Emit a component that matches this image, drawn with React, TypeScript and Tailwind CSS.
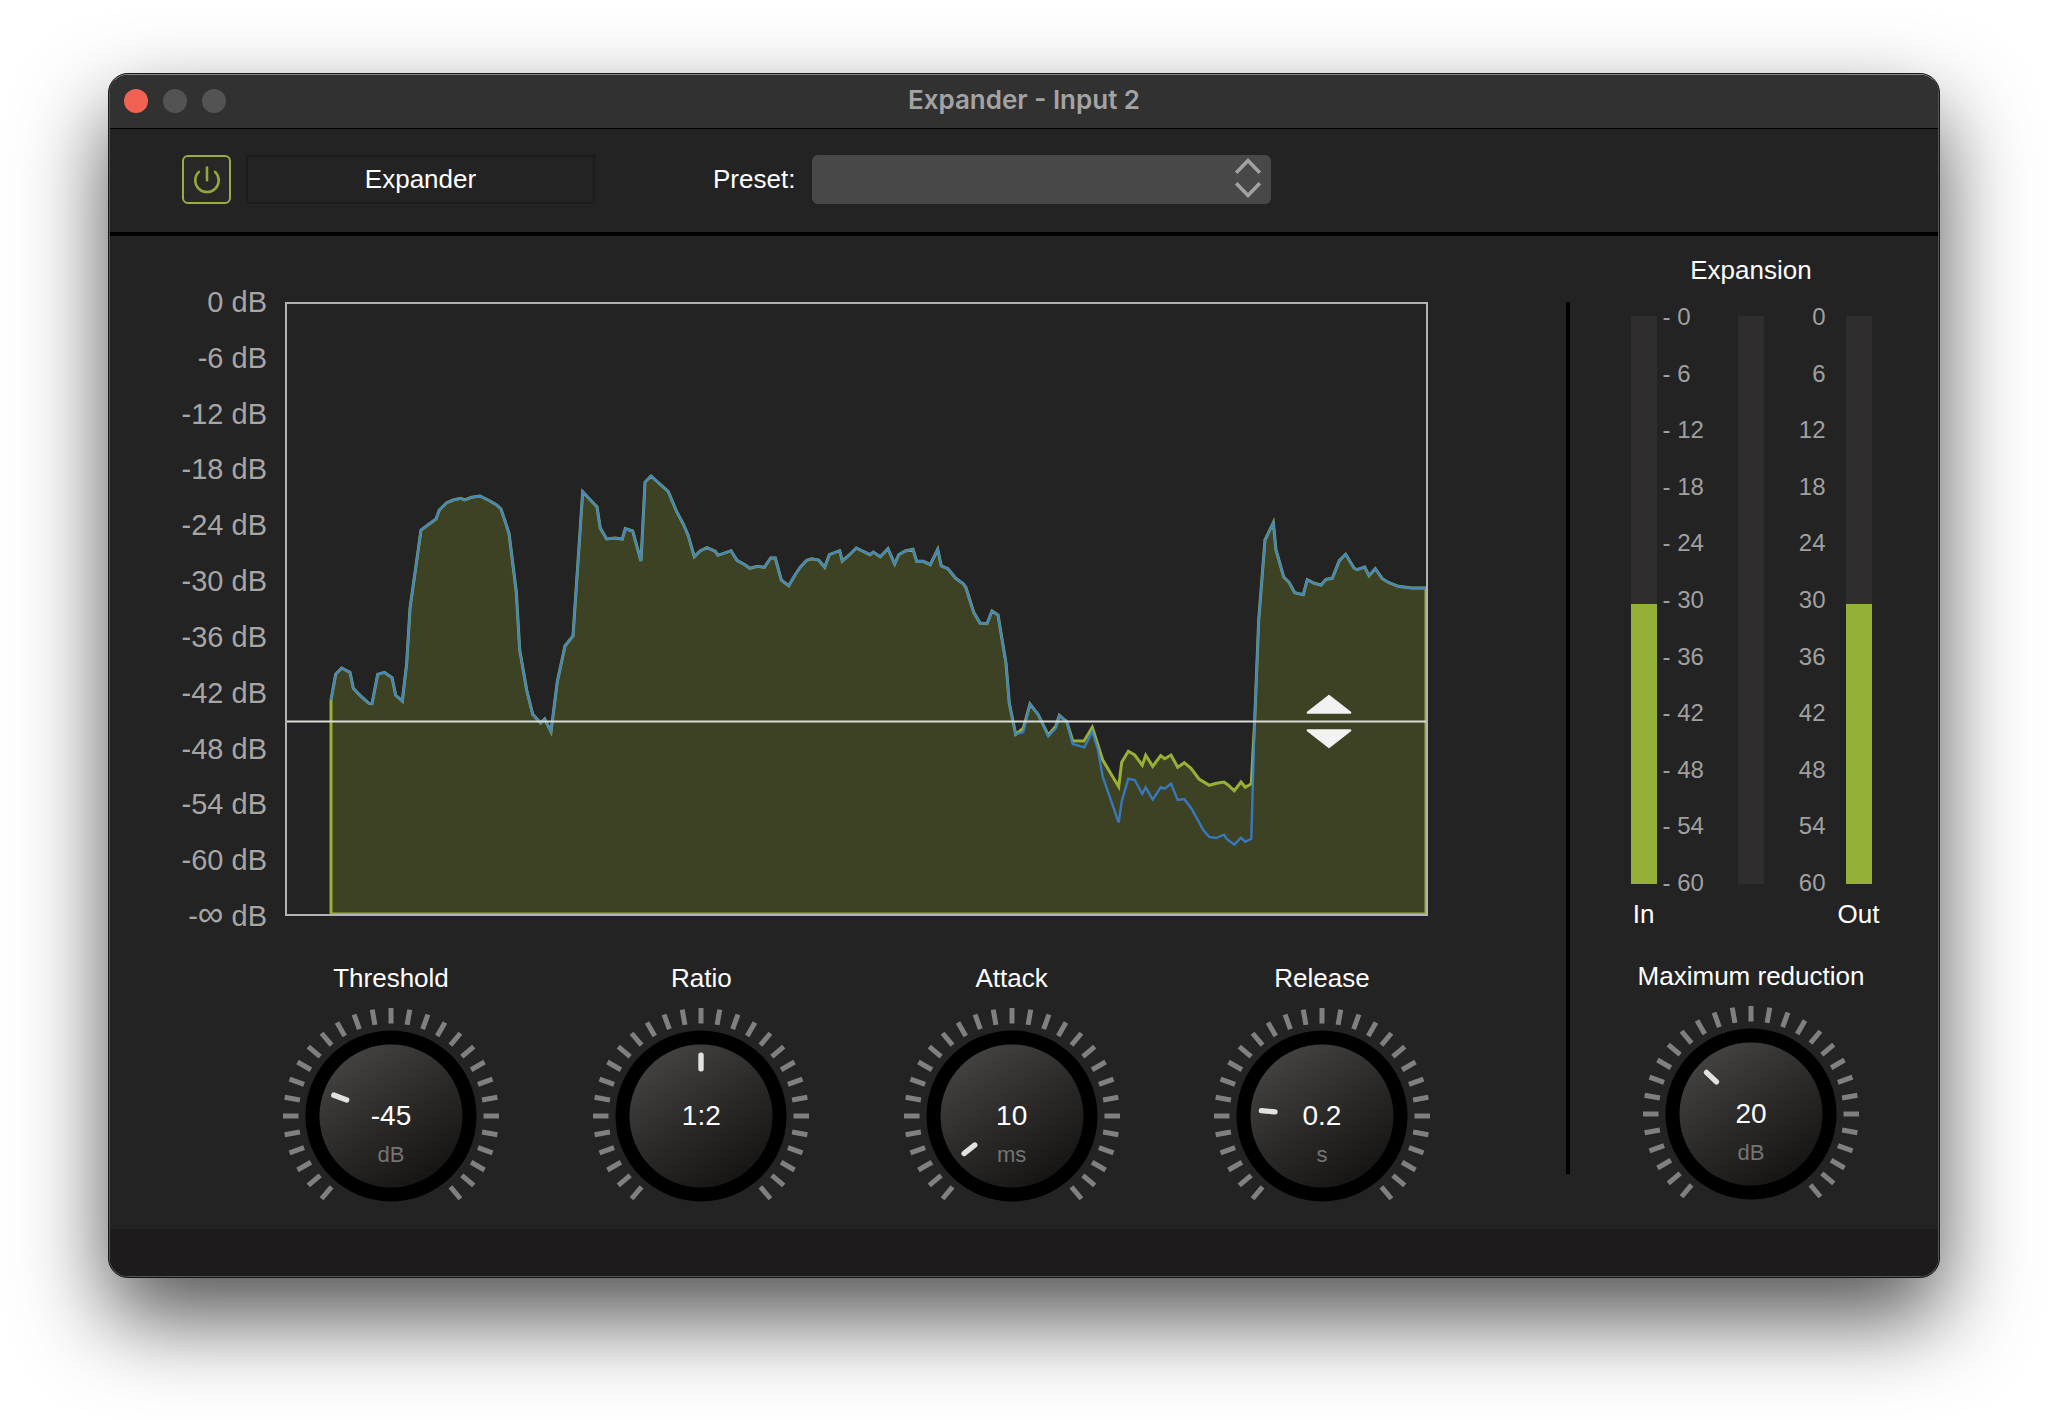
import { useId } from "react";

type Point = [number, number];

const chartLabels = ["0", "-6", "-12", "-18", "-24", "-30", "-36", "-42", "-48", "-54", "-60"];
const meterLabels = ["0", "6", "12", "18", "24", "30", "36", "42", "48", "54", "60"];

const lead: Point[] = [
  [331, 700], [335.7, 674.3], [341.7, 668], [350, 672.3], [353.3, 688.3], [360, 695.3], [369, 703.3], [372, 703.7],
  [377.7, 674.3], [384.3, 672.3], [392, 677.7], [395.7, 695.3], [402.3, 701], [406.7, 663.3], [410, 608.3],
  [421, 530], [436, 519], [439.3, 510], [446.7, 502.7], [453.3, 500], [460.7, 498.3], [464.7, 500], [471.7, 497.3],
  [480, 496], [490, 501], [496.7, 505], [501, 509], [509, 533.3], [516.3, 591.7], [519.7, 650], [526.7, 690],
  [532.7, 714.3], [540.7, 723], [544.7, 719], [551, 731.7], [557.3, 681.7], [565, 646], [573, 636], [582.7, 491.7],
  [597, 507], [600.3, 528.3], [606.7, 539], [615, 538], [622.3, 539], [625.3, 528.7], [632.7, 531], [641, 561],
  [645, 482.3], [651, 476], [668.3, 491.7], [676.7, 511.7], [683.7, 525], [688.3, 535.7], [694.3, 556.7],
  [700, 551], [707, 547.7], [715.3, 551.3], [718, 555.3], [731, 550.7], [737, 560.3], [745, 564.7], [749.7, 568.3],
  [757.7, 566.3], [764.3, 567.3], [770.7, 558], [775.3, 558], [781.3, 580], [788.7, 585.7], [795, 575],
  [800.7, 566.7], [806.7, 560.3], [811.7, 558.7], [818.7, 560], [824.7, 567.3], [829.3, 554.7], [839.7, 550.7],
  [842.3, 561], [849.3, 555], [856.3, 548], [870, 554.7], [873.3, 552], [880.3, 556.7], [888, 548.7], [894.7, 564],
  [898.7, 554.7], [905.3, 551], [913, 549.3], [916.7, 561.3], [923.3, 561.3], [930.3, 564.7], [937.7, 549.3],
  [941.3, 566], [948, 568.7], [955.7, 578.3], [963.3, 583.7], [966, 587.7], [973.7, 612.3], [980, 623],
  [987, 623.7], [992, 611], [998, 615], [1006, 663.3], [1009.3, 703.3], [1015.7, 734.3],
];

const inputDip: Point[] = [
  [1023.3, 728.3], [1030, 704], [1038.3, 714.7], [1048.3, 735.3], [1056, 726], [1059.3, 715.3], [1066.7, 721.7],
  [1072.7, 740.7], [1084, 741], [1092.3, 727.3], [1102.7, 760], [1118.7, 786.7], [1121.7, 762.3], [1128.3, 751.3],
  [1134.7, 755], [1142.3, 765.3], [1145.7, 755.3], [1152.7, 766.3], [1160.7, 755.7], [1164.7, 758.7], [1171, 755],
  [1177.7, 767.3], [1184.3, 762.7], [1191, 768.3], [1199, 779], [1209.3, 785.3], [1216.7, 783.3], [1224, 782],
  [1227.7, 784.7], [1234.3, 790.7], [1241, 782], [1245.3, 787.3], [1251.3, 783.7],
];

const outputDip: Point[] = [
  [1023.3, 732], [1030, 704], [1038.3, 714.7], [1048.3, 736.3], [1056, 728], [1059.3, 715.3], [1066.7, 721.7],
  [1072.7, 744], [1084.3, 747.3], [1092.3, 731.7], [1098, 750], [1102.7, 776.7], [1118.7, 822.7], [1121.7, 801.7],
  [1128.3, 778.7], [1134.7, 780], [1142.3, 794], [1145.7, 787.3], [1152.7, 799.7], [1160.7, 787.3], [1164.7, 788.7],
  [1171, 783.7], [1177.7, 800], [1184.3, 799], [1191.7, 809], [1203.3, 830], [1209.3, 837], [1216, 838],
  [1224, 834.7], [1226.7, 839], [1234.3, 844.7], [1241, 837.7], [1245.3, 841.7], [1251.3, 838.7],
];

const tail: Point[] = [
  [1254.7, 720], [1258.7, 620], [1265, 540], [1273.3, 522.7], [1276, 550], [1283.7, 577], [1289.3, 582.7],
  [1294.7, 592.7], [1303.3, 594.7], [1307.3, 579.7], [1314.3, 583.3], [1321, 585], [1326, 579.3], [1332.3, 578.3],
  [1339.3, 560.7], [1345.7, 554.3], [1354, 568], [1357, 569.7], [1364.7, 567], [1369, 575.7], [1375.3, 568.7],
  [1382.3, 578.7], [1389, 582.7], [1398.3, 586.3], [1411.7, 588], [1426, 588],
];

const toPoints = (points: Point[]) => points.map((p) => p.join(",")).join(" ");
const inputArea = toPoints([[331, 914], ...lead, ...inputDip, ...tail, [1426, 914]]);
const outputLine = toPoints([...lead, ...outputDip, ...tail]);

const ticks = Array.from({ length: 29 }, (_, i) => -140 + i * 10);

interface KnobProps {
  label: string;
  value: string;
  unit?: string;
  angle: number;
}

function Knob({ label, value, unit, angle }: KnobProps) {
  const id = useId();
  return (
    <div className="flex w-[216px] flex-col items-center gap-[14px]">
      <label htmlFor={id} className="text-[26px] leading-8 whitespace-nowrap text-white">
        {label}
      </label>
      <div className="relative size-[216px]">
        <svg viewBox="-108 -108 216 216" className="size-full" aria-hidden="true">
          <defs>
            <linearGradient id={`${id}-face`} x1="0.2" y1="0.05" x2="0.8" y2="0.95">
              <stop offset="0" stopColor="#444341" />
              <stop offset="0.5" stopColor="#2b2a28" />
              <stop offset="1" stopColor="#151412" />
            </linearGradient>
          </defs>
          {ticks.map((t) => (
            <rect key={t} x="-2.5" y="-108" width="5" height="15.5" fill="#808080" transform={`rotate(${t})`} />
          ))}
          <circle r="85.5" fill="#000" />
          <circle r="71.5" fill={`url(#${id}-face)`} />
          <rect x="-2.7" y="-63.5" width="5.4" height="19" rx="2.5" fill="#e2e2e0" transform={`rotate(${angle})`} />
        </svg>
        <div className="pointer-events-none absolute inset-x-0 top-[92px] flex flex-col items-center gap-[9px]">
          <span className="text-[28px] leading-8 text-white">{value}</span>
          {unit && <span className="text-[22px] leading-7 text-[#747474]">{unit}</span>}
        </div>
        <input
          id={id}
          type="range"
          min={-140}
          max={140}
          defaultValue={angle}
          aria-valuetext={unit ? `${value} ${unit}` : value}
          className="absolute inset-0 size-full cursor-pointer opacity-0"
        />
      </div>
    </div>
  );
}

function Meter({ label, level }: { label: string; level: number }) {
  return (
    <div
      role="meter"
      aria-label={label}
      aria-valuenow={level}
      aria-valuemin={0}
      aria-valuemax={100}
      className="flex w-[26px] flex-col justify-end bg-[#302d2e]"
    >
      <div className="bg-[#95b036]" style={{ height: `${level}%` }} />
    </div>
  );
}

function TitleBar() {
  return (
    <header className="grid h-[54px] grid-cols-[1fr_auto_1fr] items-center border-b border-black bg-[#313131] px-[14px] pb-[2px]">
      <div className="flex gap-[15px]">
        <button type="button" aria-label="Close" className="size-6 rounded-full bg-[#f26252]" />
        <button type="button" aria-label="Minimize" className="size-6 rounded-full bg-[#535353]" />
        <button type="button" aria-label="Zoom" className="size-6 rounded-full bg-[#535353]" />
      </div>
      <h1 className="pb-[2px] font-[Inter,sans-serif] text-[26px] leading-8 font-semibold text-[#a3a3a3]">Expander - Input 2</h1>
    </header>
  );
}

function Toolbar() {
  return (
    <div className="flex h-[107px] items-start border-b-4 border-black bg-[#232323] pt-[26px] pl-[72px]">
      <button
        type="button"
        aria-label="Power"
        aria-pressed="true"
        className="flex size-[49px] items-center justify-center rounded-md border-2 border-[#98ac4a] bg-[#2a2727]"
      >
        <svg viewBox="0 0 32 32" className="size-8" fill="none" stroke="#90a83c" strokeWidth="2.6" strokeLinecap="round">
          <path d="M7.9 7.9A11.7 11.7 0 1 0 24.1 7.9" />
          <path d="M16 3.6V16.2" />
        </svg>
      </button>
      <div className="ml-[15px] flex h-[49px] w-[349px] items-center justify-center border-2 border-[#1d1c1c] bg-[#242323] pb-[2px] text-[26px] leading-8 text-white">
        Expander
      </div>
      <label htmlFor="preset" className="ml-[118px] flex h-[49px] items-center pb-[2px] text-[26px] leading-8 text-white">
        Preset:
      </label>
      <div className="relative ml-[17px] h-[49px] w-[459px]">
        <select id="preset" className="size-full appearance-none rounded-md bg-[#484848] px-3 text-[26px] text-white">
          <option value=""></option>
        </select>
        <svg
          viewBox="0 0 28 42"
          className="pointer-events-none absolute top-[2px] right-[9px] h-[42px] w-7"
          fill="none"
          stroke="#a2a2a2"
          strokeWidth="3.6"
          aria-hidden="true"
        >
          <path d="M2.2 15.8L14 3.6L25.8 15.8" />
          <path d="M2.2 26.2L14 38.4L25.8 26.2" />
        </svg>
      </div>
    </div>
  );
}

function LevelChart() {
  return (
    <div className="relative h-full flex-1 border-2 border-[#b2b2b2]">
      <svg viewBox="287 304 1139 610" preserveAspectRatio="none" className="block size-full" aria-label="Level history">
        <polygon points={inputArea} fill="#3c4223" stroke="#97b138" strokeWidth="3" />
        <polyline points={outputLine} fill="none" stroke="#3a80d2" strokeWidth="2.4" strokeOpacity="0.88" />
        <rect x="287" y="720.5" width="1139" height="2" fill="#dadcd6" />
      </svg>
      <button type="button" aria-label="Move threshold" className="absolute top-[389px] right-[74px] h-[56px] w-[46px]">
        <svg viewBox="0 0 46 56" className="size-full" fill="#f2f2f2" stroke="#f2f2f2" strokeWidth="1.5" strokeLinejoin="round">
          <path d="M23 2.5L44.5 19.3V20H1.5V19.3Z" />
          <path d="M23 54.5L44.5 37.7V37H1.5V37.7Z" />
        </svg>
      </button>
    </div>
  );
}

export default function App() {
  return (
    <div className="min-h-screen overflow-hidden bg-white px-[108px] pt-[73px] pb-[142px] font-['Liberation_Sans',Arial,sans-serif]">
      <div className="rounded-[20px] border border-[#161616] bg-[#161616] shadow-[0_40px_88px_rgba(0,0,0,0.68)]">
        <div className="overflow-hidden rounded-[19px] border border-[#555555] border-t-[#8a8a8a]">
          <TitleBar />
          <Toolbar />
          <main className="flex bg-[#232323]">
            <section className="flex flex-1 flex-col pt-[66px] pr-[138px] pb-[5px]">
              <div className="flex h-[614px]">
                <div className="-my-4 flex w-[175px] flex-col justify-between pr-[18px] text-right text-[29px] leading-8 text-[#a6a6a6]">
                  {chartLabels.map((l) => (
                    <span key={l}>{l} dB</span>
                  ))}
                  <span className="h-8">
                    -<span className="text-4xl leading-4">∞</span> dB
                  </span>
                </div>
                <LevelChart />
              </div>
              <div className="mt-[46px] -mr-[2px] ml-[173px] flex justify-between">
                <Knob label="Threshold" value="-45" unit="dB" angle={-70} />
                <Knob label="Ratio" value="1:2" angle={0} />
                <Knob label="Attack" value="10" unit="ms" angle={-128} />
                <Knob label="Release" value="0.2" unit="s" angle={-85} />
              </div>
            </section>
            <div className="mt-[66px] mb-[55px] w-1 bg-black" />
            <section className="flex w-[368px] flex-col items-center pt-[18px] pr-[6px]">
              <h2 className="text-[26px] leading-8 text-white">Expansion</h2>
              <div className="mt-[30px] flex h-[568px]">
                <Meter label="In" level={49.3} />
                <div className="-my-[15px] flex w-[81px] flex-col justify-between pl-[6px] text-2xl leading-8 text-[#a0a0a0]">
                  {meterLabels.map((l) => (
                    <span key={l}>- {l}</span>
                  ))}
                </div>
                <Meter label="Expansion" level={0} />
                <div className="-my-[15px] flex w-[82px] flex-col justify-between pr-[20px] text-right text-2xl leading-8 text-[#a0a0a0]">
                  {meterLabels.map((l) => (
                    <span key={l}>{l}</span>
                  ))}
                </div>
                <Meter label="Out" level={49.3} />
              </div>
              <div className="mt-[14px] mb-[30px] flex w-[241px] justify-between text-[26px] leading-8 text-white">
                <div className="flex w-[26px] justify-center">In</div>
                <div className="flex w-[26px] justify-center">Out</div>
              </div>
              <Knob label="Maximum reduction" value="20" unit="dB" angle={-47} />
            </section>
          </main>
          <footer className="h-[47px] bg-[#1e1b1c]" />
        </div>
      </div>
    </div>
  );
}
